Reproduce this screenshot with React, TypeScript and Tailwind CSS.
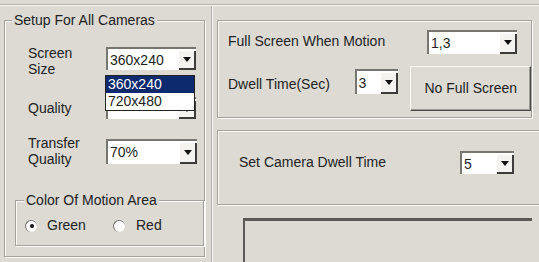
import React from 'react';

const font = { fontFamily: '"Liberation Sans", Arial, sans-serif' };

function Combo({ value, className }: { value: string; className: string }) {
  return (
    <div className={`flex bg-white border-t-2 border-l-2 border-[#77756f] ${className}`}>
      <span className="flex-1 pl-[2px] text-[14px] leading-none self-center text-[#1e1e1e]">{value}</span>
      <span className="w-[17px] flex items-center justify-center bg-[#f4f3f0] border-r-2 border-b-2 border-[#3d3c3a] mt-[2px]">
        <svg width="8" height="5" viewBox="0 0 8 5">
          <path d="M0 0h8L4 5z" fill="#111" />
        </svg>
      </span>
    </div>
  );
}

function Etched({ className, children }: { className: string; children?: React.ReactNode }) {
  return (
    <div
      className={`relative border border-[#a3a19b] shadow-[inset_1px_1px_0_#fbfaf7,1px_1px_0_#fbfaf7] ${className}`}
    >
      {children}
    </div>
  );
}

export default function App() {
  return (
    <div className="w-[539px] h-[262px] overflow-hidden bg-[#dcdad3] text-[14px] text-[#222]" style={font}>
      {/* top divider */}
      <div className="mt-[4px] h-[2px] border-t border-[#b2b0aa] border-b border-b-[#f7f6f2]" />

      <div className="flex">
        {/* left: setup for all cameras */}
        <Etched className="ml-[4px] mt-[14px] w-[201px] h-[237px] shrink-0">
          <span className="absolute left-[7px] -top-[9px] px-[2px] bg-[#dcdad3] leading-[16px]">
            Setup For All Cameras
          </span>

          <div className="flex items-start pt-[24px] pl-[23px] h-[55px]">
            <span className="w-[78px] leading-[16px]">
              Screen
              <br />
              Size
            </span>
            <Combo value="360x240" className="mt-[2px] w-[90px] h-[23px]" />
          </div>

          <div className="flex items-center pl-[23px] mt-[21px] h-[22px]">
            <span className="w-[78px]">Quality</span>
            <Combo value="" className="w-[90px] h-[22px]" />
          </div>

          <div className="flex items-center pl-[23px] mt-[16px] h-[32px]">
            <span className="w-[78px] leading-[16px]">
              Transfer
              <br />
              Quality
            </span>
            <Combo value="70%" className="w-[91px] h-[25px]" />
          </div>

          <Etched className="ml-[10px] mt-[33px] w-[189px] h-[46px]">
            <span className="absolute left-[8px] -top-[9px] px-[2px] bg-[#dcdad3] leading-[16px]">
              Color Of Motion Area
            </span>
            <div className="flex items-center pt-[14px] pl-[9px]">
              <span className="w-[12px] h-[12px] rounded-full bg-white border-t border-l border-[#6e6c68] flex items-center justify-center">
                <span className="w-[4px] h-[4px] rounded-full bg-[#111]" />
              </span>
              <span className="ml-[10px] w-[66px]">Green</span>
              <span className="w-[12px] h-[12px] rounded-full bg-white border-t border-l border-[#6e6c68]" />
              <span className="ml-[11px]">Red</span>
            </div>
          </Etched>

          {/* open dropdown list */}
          <div className="absolute left-[100px] top-[54px] w-[90px] bg-white border border-[#222] text-[14px] leading-[16px]">
            <div className="bg-[#0d2a6e] text-white pl-[2px] h-[17px]">360x240</div>
            <div className="pl-[2px] h-[17px]">720x480</div>
          </div>
        </Etched>

        {/* splitter */}
        <div className="ml-[6px] w-[2px] h-[256px] border-l border-[#b2b0aa] border-r border-r-[#f7f6f2]" />

        {/* right column */}
        <div className="ml-[4px] flex flex-col">
          <Etched className="mt-[14px] w-[315px] h-[98px]">
            <div className="flex items-center pl-[10px] pt-[8px] h-[33px]">
              <span className="w-[199px]">Full Screen When Motion</span>
              <Combo value="1,3" className="w-[90px] h-[24px]" />
            </div>
            <div className="flex items-start pl-[10px] pt-[12px]">
              <span className="w-[127px] mt-[8px]">Dwell Time(Sec)</span>
              <Combo value="3" className="mt-[3px] w-[44px] h-[25px]" />
              <button className="ml-[12px] w-[121px] h-[45px] bg-[#dddbd4] border border-t-[#fbfaf7] border-l-[#fbfaf7] border-r-[#4a4946] border-b-[#4a4946] shadow-[inset_-1px_-1px_0_#9d9b95] text-[14px] text-[#222]">
                No Full Screen
              </button>
            </div>
          </Etched>

          <Etched className="mt-[12px] w-[330px] h-[75px]">
            <div className="flex items-center pl-[21px] pt-[20px] h-[43px]">
              <span className="w-[221px]">Set Camera Dwell Time</span>
              <Combo value="5" className="w-[54px] h-[23px]" />
            </div>
          </Etched>

          <div className="ml-[26px] mt-[13px] w-[289px] h-[60px] border-t-[3px] border-l-2 border-[#5b5a57] bg-[#dcdad3]" />
        </div>
      </div>
    </div>
  );
}
